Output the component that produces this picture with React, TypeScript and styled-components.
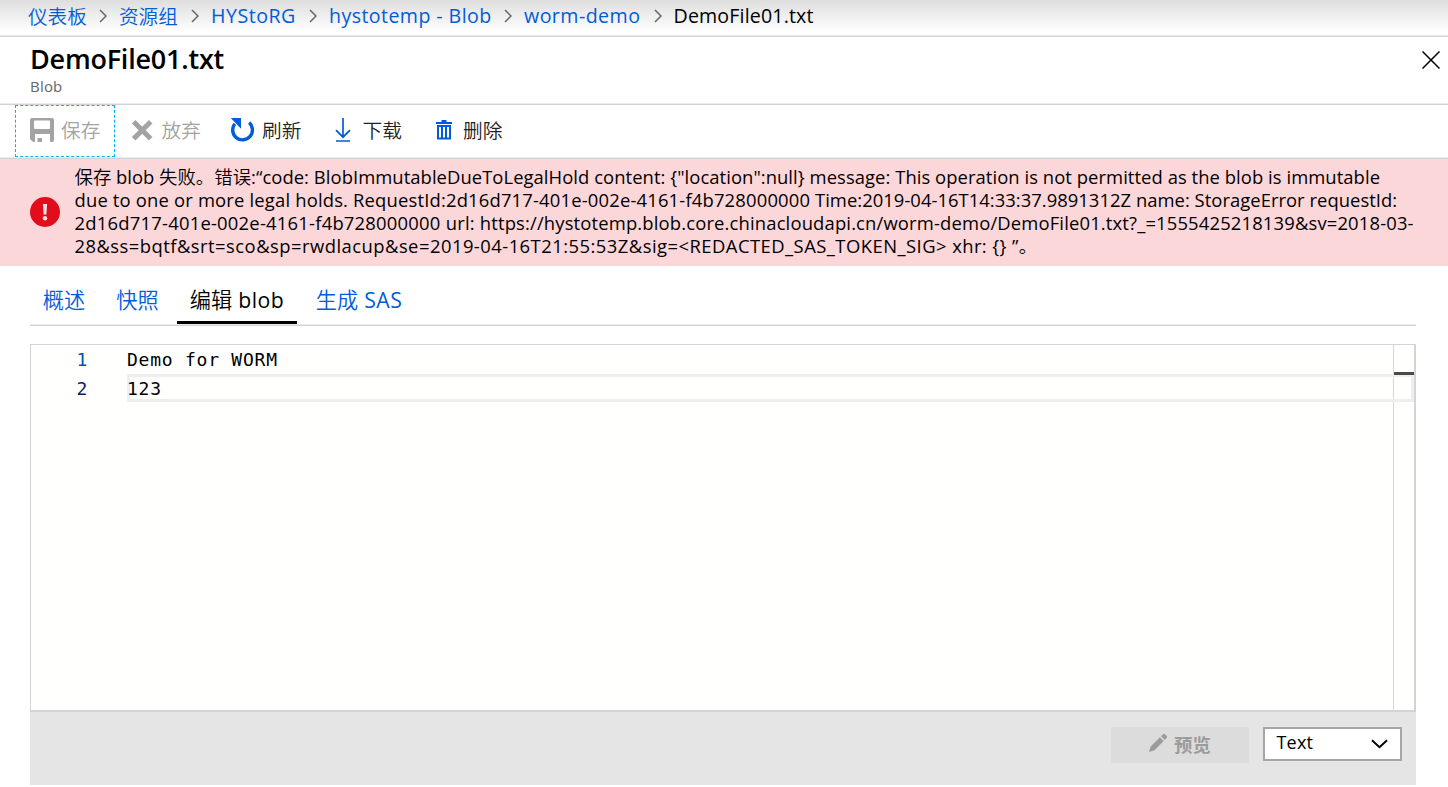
import React from "react";
import styled, { createGlobalStyle } from "styled-components";

const Global = createGlobalStyle`
  *, *::before, *::after { box-sizing: border-box; }
  body {
    margin: 0;
    background: #fff;
    color: #000;
    font-family: "Open Sans", "Noto Sans CJK SC", sans-serif;
  }
`;

const Page = styled.div`
  display: flex;
  flex-direction: column;
  width: 1448px;
  height: 787px;
  overflow: hidden;
  background: #fff;
`;

/* Chinese runs are set a little lighter than the Latin text beside them. */
const Han = styled.span<{ $weight?: number }>`
  font-family: "Noto Sans CJK SC", sans-serif;
  font-weight: ${(p) => p.$weight ?? 350};
  letter-spacing: 0;
`;

const Breadcrumbs = styled.nav`
  display: flex;
  align-items: center;
  flex: none;
  height: 37px;
  padding: 0 0 5px 28px;
  background: linear-gradient(#dedede, #fff 32px);
  border-bottom: 1px solid #d2d2d2;
  box-shadow: inset 0 -1px #ececec;
  font-size: 19.6px;
  line-height: 31px;
  white-space: nowrap;
`;

const Crumb = styled.a<{ $width: number; $spacing?: number; $current?: boolean }>`
  flex: none;
  width: ${(p) => p.$width}px;
  letter-spacing: ${(p) => p.$spacing ?? 0}px;
  color: ${(p) => (p.$current ? "#000" : "#015cda")};
`;

const ChevronIcon = styled.svg`
  flex: none;
  width: 8px;
  height: 14px;
  margin: 1px 12px 0 11px;
`;

const Header = styled.header`
  display: flex;
  justify-content: space-between;
  flex: none;
  height: 68px;
  padding: 4px 8px 0 30px;
  border-bottom: 1px solid #d2d2d2;
  box-shadow: inset 0 -1px #ececec;
`;

const Title = styled.h1`
  margin: 0;
  font-size: 27px;
  font-weight: 600;
  line-height: 36px;
  letter-spacing: -0.22px;
`;

const Subtitle = styled.div`
  font-size: 15px;
  line-height: 18px;
  letter-spacing: 0.2px;
  color: #666;
`;

const CloseIcon = styled.svg`
  width: 18px;
  height: 18px;
  margin-top: 10px;
`;

const Toolbar = styled.div`
  display: flex;
  flex: none;
  height: 54px;
  padding-left: 15px;
  border-bottom: 1px solid #d0d4d8;
  box-shadow: inset 0 -1px #ececec;
`;

const ToolButton = styled.button<{ $width: number; $disabled?: boolean; $focused?: boolean }>`
  display: flex;
  align-items: center;
  flex: none;
  width: ${(p) => p.$width}px;
  height: 52px;
  padding: 0 0 2px 14px;
  border: 1px dashed ${(p) => (p.$focused ? "#00b4f0" : "transparent")};
  background: transparent;
  font-size: 19.7px;
  color: ${(p) => (p.$disabled ? "#a3a3a3" : "#222")};
`;

const ToolLabel = styled(Han)`
  padding-bottom: 2px;
`;

const ToolIcon = styled.svg<{ $gap: number }>`
  flex: none;
  width: 24px;
  height: 24px;
  margin-right: ${(p) => p.$gap}px;
`;

const Alert = styled.section`
  display: flex;
  flex: none;
  height: 107px;
  padding: 6px 0 0 30px;
  background: #fcd7da;
`;

const AlertIcon = styled.svg`
  flex: none;
  width: 30px;
  height: 30px;
  margin: 32px 14.5px 0 0;
`;

const AlertText = styled.div`
  font-size: 18.4px;
  line-height: 23px;
  white-space: pre;
`;

const AlertLine = styled.div`
  height: 23px;
`;

const Run = styled.span<{ $spacing: number }>`
  letter-spacing: ${(p) => p.$spacing}px;
`;

const Tabs = styled.div`
  display: flex;
  flex: none;
  height: 60px;
  margin: 0 32px 0 30px;
  border-bottom: 1px solid #d2d2d2;
  box-shadow: inset 0 -1px #ececec;
`;

const Tab = styled.button<{ $width: number; $active?: boolean }>`
  flex: none;
  width: ${(p) => p.$width}px;
  height: 58px;
  padding: 12px 0 0;
  border: 0;
  border-bottom: 3px solid ${(p) => (p.$active ? "#000" : "transparent")};
  background: transparent;
  font-family: inherit;
  font-size: 21.2px;
  line-height: 28px;
  letter-spacing: 0.5px;
  white-space: nowrap;
  color: ${(p) => (p.$active ? "#000" : "#015cda")};
`;

const Editor = styled.div`
  display: flex;
  flex: none;
  height: 368px;
  margin: 18px 32px 0 30px;
  border: solid #d4d4d4;
  border-width: 1px 2px 2px 1px;
  background: #fffffe;
  font-family: "DejaVu Sans Mono", monospace;
  font-size: 18px;
  letter-spacing: 0.76px;
  line-height: 29px;
`;

const LineNumbers = styled.div`
  flex: none;
  width: 57px;
  text-align: right;
`;

const LineNumber = styled.div<{ $muted?: boolean }>`
  height: 29px;
  color: ${(p) => (p.$muted ? "#0451a5" : "#0b216f")};
`;

const Code = styled.div`
  flex: 1;
  margin-left: 39px;
  border-right: 1px solid #d6d6d6;
`;

const CodeLine = styled.div<{ $current?: boolean }>`
  height: ${(p) => (p.$current ? 28 : 29)}px;
  margin-right: ${(p) => (p.$current ? -21 : 0)}px;
  line-height: 29px;
  box-shadow: ${(p) => (p.$current ? "inset 0 0 0 3px #eeeeee" : "none")};
`;

const Ruler = styled.div`
  flex: none;
  width: 20px;
  padding-top: 27px;
`;

const RulerMark = styled.div`
  position: relative;
  height: 3px;
  background: #4a4a4a;
`;

const Footer = styled.footer`
  display: flex;
  justify-content: flex-end;
  align-items: flex-start;
  gap: 14px;
  flex: none;
  height: 73px;
  margin: 0 32px 0 30px;
  padding: 15px 14px 0 0;
  background: #e5e5e5;
`;

const PreviewButton = styled.button`
  display: flex;
  align-items: center;
  justify-content: center;
  gap: 7px;
  width: 138px;
  height: 36px;
  padding: 0 0 2px;
  border: 0;
  background: #dcdcdc;
  font-size: 18.4px;
  color: #9b9b9b;
`;

const PencilIcon = styled.svg`
  width: 18px;
  height: 18px;
  margin-top: -3px;
`;

const Select = styled.button`
  display: flex;
  align-items: center;
  justify-content: space-between;
  width: 139px;
  height: 34px;
  padding: 0 12px 4px 11.5px;
  border: 2px solid #a6a6a6;
  background: #fff;
  font-family: inherit;
  font-size: 18px;
  letter-spacing: 0.2px;
  color: #000;
`;

const SelectArrow = styled.svg`
  width: 17px;
  height: 10px;
  margin-top: 4px;
`;

const Chevron = () => (
  <ChevronIcon viewBox="0 0 8 14" fill="none" stroke="#666" strokeWidth="1.5">
    <path d="M1 1l6 6-6 6" />
  </ChevronIcon>
);

const crumbs: { text: string; width: number; spacing?: number; han?: boolean }[] = [
  { text: "仪表板", width: 60, han: true },
  { text: "资源组", width: 61, han: true },
  { text: "HYStoRG", width: 87, spacing: 0.5 },
  { text: "hystotemp - Blob", width: 164, spacing: 0.42 },
  { text: "worm-demo", width: 118.5, spacing: 0.45 },
];

export default function App() {
  return (
    <>
      <Global />
      <Page>
        <Breadcrumbs>
          {crumbs.map((c) => (
            <React.Fragment key={c.text}>
              <Crumb $width={c.width} $spacing={c.spacing}>
                {c.han ? <Han>{c.text}</Han> : c.text}
              </Crumb>
              <Chevron />
            </React.Fragment>
          ))}
          <Crumb $width={145} $spacing={0.16} $current>
            DemoFile01.txt
          </Crumb>
        </Breadcrumbs>

        <Header>
          <div>
            <Title>DemoFile01.txt</Title>
            <Subtitle>Blob</Subtitle>
          </div>
          <CloseIcon viewBox="0 0 18 18" fill="none" stroke="#000" strokeWidth="1.5">
            <path d="M0.5 0.5l17 17M17.5 0.5l-17 17" />
          </CloseIcon>
        </Header>

        <Toolbar>
          <ToolButton $width={100} $disabled $focused>
            <ToolIcon $gap={7} viewBox="0 0 24 24">
              <path
                fill="#a3a3a3"
                fillRule="evenodd"
                d="M2 0h20a2 2 0 0 1 2 2v20a2 2 0 0 1-2 2h-2v-8H5v8H3l-3-3V2a2 2 0 0 1 2-2zM5 2.5a1 1 0 0 0-1 1V10a1 1 0 0 0 1 1h14a1 1 0 0 0 1-1V3.5a1 1 0 0 0-1-1zM7.500 20H12v4H7.500z"
              />
            </ToolIcon>
            <ToolLabel>保存</ToolLabel>
          </ToolButton>
          <ToolButton $width={100} $disabled>
            <ToolIcon $gap={7.5} viewBox="0 0 24 24" fill="none" stroke="#a3a3a3" strokeWidth="5">
              <path d="M3.700 3.700l17 17M20.700 3.700l-17 17" />
            </ToolIcon>
            <ToolLabel>放弃</ToolLabel>
          </ToolButton>
          <ToolButton $width={101}>
            <ToolIcon $gap={8} viewBox="0 0 24 24">
              <path d="M19.200 4.600A9.900 9.900 0 1 1 4.800 5.800" fill="none" stroke="#015cda" strokeWidth="3.4" />
              <path d="M0.800 0H11v10.800z" fill="#015cda" />
            </ToolIcon>
            <ToolLabel>刷新</ToolLabel>
          </ToolButton>
          <ToolButton $width={101}>
            <ToolIcon $gap={7.5} viewBox="0 0 24 24" fill="none" stroke="#015cda" strokeWidth="1.7">
              <path d="M12 0v19M5 12.200l7 7 7-7M5 23h14" />
            </ToolIcon>
            <ToolLabel>下载</ToolLabel>
          </ToolButton>
          <ToolButton $width={101}>
            <ToolIcon $gap={7} viewBox="0 0 24 24" fill="none" stroke="#015cda" strokeWidth="2">
              <path d="M4 5h16M9.500 3h5" />
              <path d="M6 8h12v12.500H6zM10 8v12M14 8v12" />
            </ToolIcon>
            <ToolLabel>删除</ToolLabel>
          </ToolButton>
        </Toolbar>

        <Alert>
          <AlertIcon viewBox="0 0 30 30">
            <circle cx="15" cy="15" r="15" fill="#e20d1c" />
            <path d="M12.900 7h4.200l-.7 10.500h-2.800z" fill="#fcdfe2" />
            <circle cx="15" cy="21.300" r="2.200" fill="#fcdfe2" />
          </AlertIcon>
          <AlertText>
            <AlertLine>
              <Han>保存</Han> blob <Han>失败。错误</Han>
              <Run $spacing={0.065}>
                {':“code: BlobImmutableDueToLegalHold content: {"location":null} message: This operation is not permitted as the blob is immutable'}
              </Run>
            </AlertLine>
            <AlertLine>
              <Run $spacing={0.182}>
                due to one or more legal holds. RequestId:2d16d717-401e-002e-4161-f4b728000000
              </Run>
              <Run $spacing={0.04}>
                {" Time:2019-04-16T14:33:37.9891312Z name: StorageError requestId:"}
              </Run>
            </AlertLine>
            <AlertLine>
              <Run $spacing={0.235}>2d16d717-401e-002e-4161-f4b728000000 url:</Run>
              <Run $spacing={0.165}>
                {" https://hystotemp.blob.core.chinacloudapi.cn/worm-demo/DemoFile01.txt?_=1555425218139&sv=2018-03-"}
              </Run>
            </AlertLine>
            <AlertLine>
              <Run $spacing={0.475}>
                {"28&ss=bqtf&srt=sco&sp=rwdlacup&se=2019-04-16T21:55:53Z&sig=<REDACTED_SAS_TOKEN_SIG>"}
              </Run>
              <Run $spacing={0.4}>{" xhr: {} ”"}</Run>
              <Han>。</Han>
            </AlertLine>
          </AlertText>
        </Alert>

        <Tabs>
          <Tab $width={68}>
            <Han>概述</Han>
          </Tab>
          <Tab $width={79}>
            <Han>快照</Han>
          </Tab>
          <Tab $width={120} $active>
            <Han>编辑</Han> blob
          </Tab>
          <Tab $width={124}>
            <Han>生成</Han> SAS
          </Tab>
        </Tabs>

        <Editor>
          <LineNumbers>
            <LineNumber $muted>1</LineNumber>
            <LineNumber>2</LineNumber>
          </LineNumbers>
          <Code>
            <CodeLine>Demo for WORM</CodeLine>
            <CodeLine $current>123</CodeLine>
          </Code>
          <Ruler>
            <RulerMark />
          </Ruler>
        </Editor>

        <Footer>
          <PreviewButton>
            <PencilIcon viewBox="0 0 19 19" fill="#9b9b9b">
              <path d="M0 19l1.800-5.800L11.500 3.500l4 4-9.700 9.700zM12.700 2.300l1.700-1.700a2 2 0 0 1 2.800 0l1.200 1.200a2 2 0 0 1 0 2.800l-1.700 1.700z" />
            </PencilIcon>
            <Han $weight={700}>预览</Han>
          </PreviewButton>
          <Select>
            Text
            <SelectArrow viewBox="0 0 18 10" fill="none" stroke="#000" strokeWidth="2">
              <path d="M1 1l8 7.500L17 1" />
            </SelectArrow>
          </Select>
        </Footer>
      </Page>
    </>
  );
}
